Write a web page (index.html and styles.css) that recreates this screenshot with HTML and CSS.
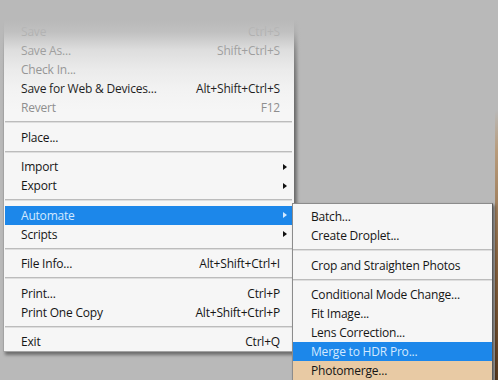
FILE: index.html
```html
<!DOCTYPE html>
<html>
<head>
<meta charset="utf-8">
<link rel="stylesheet" href="styles.css">
</head>
<body>
<div class="menu main">
  <div class="row disabled"><span class="label">Save</span><span class="key">Ctrl+S</span><span class="sub"></span></div>
  <div class="row disabled"><span class="label">Save As...</span><span class="key">Shift+Ctrl+S</span><span class="sub"></span></div>
  <div class="row disabled"><span class="label">Check In...</span><span class="key"></span><span class="sub"></span></div>
  <div class="row"><span class="label">Save for Web &amp; Devices...</span><span class="key">Alt+Shift+Ctrl+S</span><span class="sub"></span></div>
  <div class="row disabled"><span class="label">Revert</span><span class="key">F12</span><span class="sub"></span></div>
  <div class="sep"></div>
  <div class="row"><span class="label">Place...</span><span class="key"></span><span class="sub"></span></div>
  <div class="sep"></div>
  <div class="row"><span class="label">Import</span><span class="key"></span><span class="sub"><i class="arrow"></i></span></div>
  <div class="row"><span class="label">Export</span><span class="key"></span><span class="sub"><i class="arrow"></i></span></div>
  <div class="sep"></div>
  <div class="row active"><span class="label">Automate</span><span class="key"></span><span class="sub"><i class="arrow"></i></span></div>
  <div class="row"><span class="label">Scripts</span><span class="key"></span><span class="sub"><i class="arrow"></i></span></div>
  <div class="sep"></div>
  <div class="row"><span class="label">File Info...</span><span class="key">Alt+Shift+Ctrl+I</span><span class="sub"></span></div>
  <div class="sep"></div>
  <div class="row"><span class="label">Print...</span><span class="key">Ctrl+P</span><span class="sub"></span></div>
  <div class="row"><span class="label">Print One Copy</span><span class="key">Alt+Shift+Ctrl+P</span><span class="sub"></span></div>
  <div class="sep"></div>
  <div class="row"><span class="label">Exit</span><span class="key">Ctrl+Q</span><span class="sub"></span></div>
</div>
<div class="menu submenu">
  <div class="row"><span class="label">Batch...</span></div>
  <div class="row"><span class="label">Create Droplet...</span></div>
  <div class="sep"></div>
  <div class="row"><span class="label">Crop and Straighten Photos</span></div>
  <div class="sep"></div>
  <div class="row"><span class="label">Conditional Mode Change...</span></div>
  <div class="row"><span class="label">Fit Image...</span></div>
  <div class="row"><span class="label">Lens Correction...</span></div>
  <div class="row active"><span class="label">Merge to HDR Pro...</span></div>
  <div class="row hover"><span class="label">Photomerge...</span></div>
</div>
<div class="fade"></div>
</body>
</html>
```
FILE: styles.css
```css
html, body {
  margin: 0;
  padding: 0;
}
body {
  width: 498px;
  height: 380px;
  overflow: hidden;
  position: relative;
  background-color: #b9b9b9;
  background-image: linear-gradient(to bottom, rgba(185,185,185,0) 110px, #b89c7c 150px, #8a6540 260px, #5a3a1e 380px);
  background-size: 3px 380px;
  background-position: right top;
  background-repeat: no-repeat;
  font-family: "Open Sans", "Noto Sans", sans-serif;
  font-size: 12px;
  letter-spacing: -0.2px;
  color: #151515;
}
.menu {
  background: #f6f6f6;
  box-sizing: border-box;
}
.main {
  margin-left: 3px;
  width: 292px;
  border: 1px solid #a3a3a3;
  border-top: none;
  border-right-color: #6f6f6f;
  padding-top: 22px;
  box-shadow: 2px 3px 3px rgba(0,0,0,0.4);
}
.row {
  display: flex;
  align-items: center;
  height: 19px;
  line-height: 19px;
  white-space: nowrap;
}
.main .row {
  margin: 0 2px 0 1px;
  padding: 0 4px 0 16px;
}
.label {
  flex: 1;
}
.key {
  text-align: right;
}
.sub {
  width: 8px;
  height: 19px;
  display: flex;
  align-items: center;
}
.arrow {
  display: block;
  margin-left: 3px;
  width: 0;
  height: 0;
  border-left: 4px solid #111;
  border-top: 3.5px solid transparent;
  border-bottom: 3.5px solid transparent;
}
.disabled {
  color: #8e8e8e;
}
.active {
  background: #1c87ea;
  color: #d3e9ff;
}
.active .arrow {
  border-left-color: #d3e9ff;
}
.sep {
  height: 1px;
  border-bottom: 1px solid #dedede;
  background: #bcbcbc;
  margin: 4px 2px 4.5px 1px;
}
.submenu {
  position: absolute;
  left: 292px;
  top: 203px;
  width: 201px;
  height: 190px;
  border: 1px solid #8c8c8c;
  border-right-color: #5a5a5a;
  padding-top: 3px;
  box-shadow: 2px 2px 3px rgba(0,0,0,0.45);
}
.submenu .row {
  padding-left: 18px;
}
.submenu .sep {
  margin: 4px 0 4.5px 0;
}
.hover {
  background: #e8caa4;
  color: #151515;
}
.fade {
  position: absolute;
  left: 0;
  top: 0;
  width: 100%;
  height: 110px;
  pointer-events: none;
  background: linear-gradient(to bottom, #b9b9b9 0, #b9b9b9 20px, rgba(185,185,185,0.88) 32px, rgba(185,185,185,0.4) 50px, rgba(185,185,185,0.18) 70px, rgba(185,185,185,0.06) 90px, rgba(185,185,185,0) 110px);
}
```
